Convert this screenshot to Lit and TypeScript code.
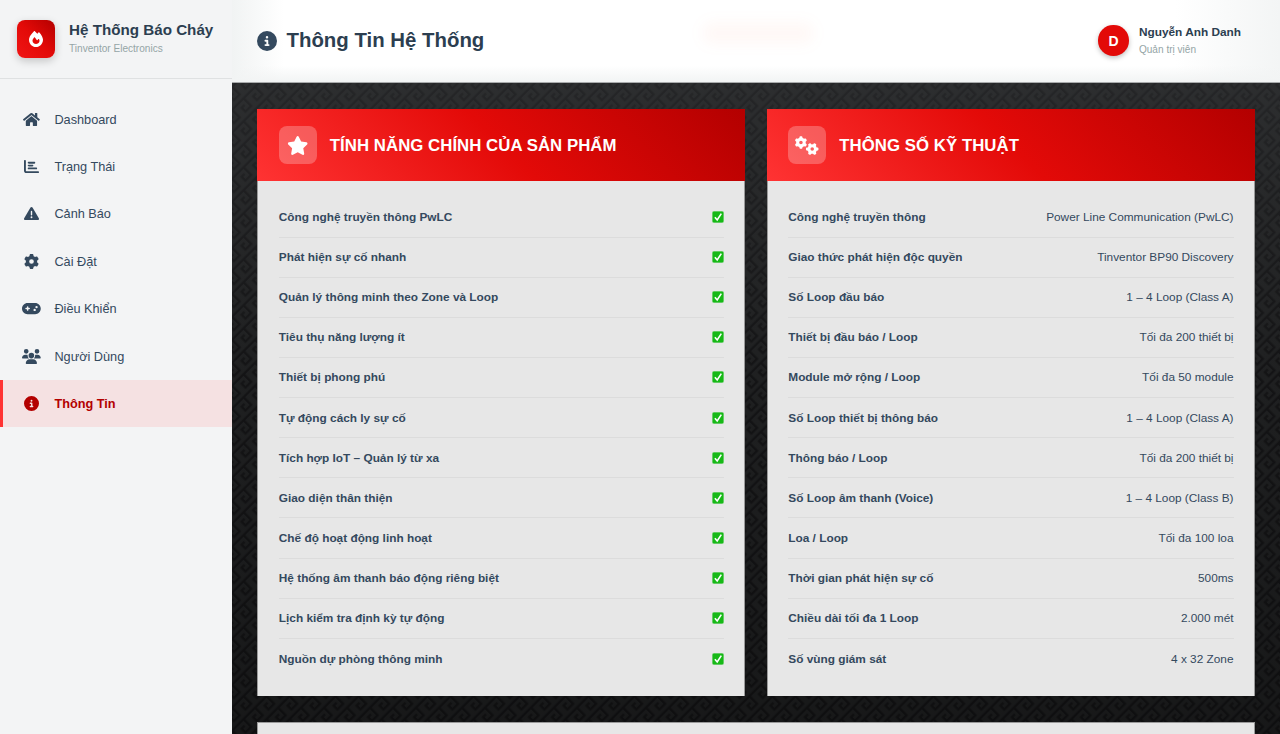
import { LitElement, html, css, svg } from "lit";
import { customElement } from "lit/decorators.js";

const P: Record<string, [string, string]> = {
  home: ["0 0 576 512", "M280.37 148.26L96 300.11V464a16 16 0 0 0 16 16l112.06-.29a16 16 0 0 0 15.92-16V368a16 16 0 0 1 16-16h64a16 16 0 0 1 16 16v95.64a16 16 0 0 0 16 16.05L464 480a16 16 0 0 0 16-16V300L295.67 148.26a12.19 12.19 0 0 0-15.3 0zM571.6 251.47L488 182.56V44.05a12 12 0 0 0-12-12h-56a12 12 0 0 0-12 12v72.61L318.47 43a48 48 0 0 0-61 0L4.34 251.47a12 12 0 0 0-1.6 16.9l25.5 31A12 12 0 0 0 45.15 301l235.22-193.74a12.19 12.19 0 0 1 15.3 0L530.9 301a12 12 0 0 0 16.9-1.6l25.5-31a12 12 0 0 0-1.7-16.93z"],
  chart: ["0 0 512 512", "M32 32c17.7 0 32 14.3 32 32V400c0 8.8 7.2 16 16 16H480c17.7 0 32 14.3 32 32s-14.3 32-32 32H80c-44.2 0-80-35.8-80-80V64C0 46.3 14.3 32 32 32zm96 96c0-17.7 14.3-32 32-32l192 0c17.7 0 32 14.3 32 32s-14.3 32-32 32l-192 0c-17.7 0-32-14.3-32-32zm32 64H288c17.7 0 32 14.3 32 32s-14.3 32-32 32H160c-17.7 0-32-14.3-32-32s14.3-32 32-32zm0 96H416c17.7 0 32 14.3 32 32s-14.3 32-32 32H160c-17.7 0-32-14.3-32-32s14.3-32 32-32z"],
  warn: ["0 0 512 512", "M256 32c14.2 0 27.3 7.5 34.5 19.8l216 368c7.3 12.4 7.3 27.7 .2 40.1S486.3 480 472 480H40c-14.3 0-27.6-7.7-34.7-20.1s-7-27.8 .2-40.1l216-368C228.7 39.5 241.8 32 256 32zm0 128c-13.3 0-24 10.7-24 24V296c0 13.3 10.7 24 24 24s24-10.7 24-24V184c0-13.3-10.7-24-24-24zm32 224a32 32 0 1 0 -64 0 32 32 0 1 0 64 0z"],
  gear: ["0 0 512 512", "M495.9 166.6c3.2 8.7 .5 18.4-6.4 24.6l-43.3 39.4c1.1 8.3 1.7 16.8 1.7 25.4s-.6 17.1-1.7 25.4l43.3 39.4c6.9 6.2 9.6 15.9 6.4 24.6c-4.4 11.9-9.7 23.3-15.8 34.3l-4.7 8.1c-6.6 11-14 21.4-22.1 31.2c-5.9 7.2-15.7 9.6-24.5 6.8l-55.7-17.7c-13.4 10.3-28.2 18.9-44 25.4l-12.5 57.1c-2 9.1-9 16.3-18.2 17.8c-13.8 2.3-28 3.5-42.5 3.5s-28.7-1.2-42.5-3.5c-9.2-1.5-16.2-8.7-18.2-17.8l-12.5-57.1c-15.8-6.5-30.6-15.1-44-25.4L83.1 425.9c-8.8 2.8-18.6 .3-24.5-6.8c-8.1-9.8-15.5-20.2-22.1-31.2l-4.7-8.1c-6.1-11-11.4-22.4-15.8-34.3c-3.2-8.7-.5-18.4 6.4-24.6l43.3-39.4C64.6 273.1 64 264.6 64 256s.6-17.1 1.7-25.4L22.4 191.2c-6.9-6.2-9.6-15.9-6.4-24.6c4.4-11.9 9.7-23.3 15.8-34.3l4.7-8.1c6.6-11 14-21.4 22.1-31.2c5.9-7.2 15.7-9.6 24.5-6.8l55.7 17.7c13.4-10.3 28.2-18.9 44-25.4l12.5-57.1c2-9.1 9-16.3 18.2-17.8C227.3 1.2 241.5 0 256 0s28.7 1.2 42.5 3.5c9.2 1.5 16.2 8.7 18.2 17.8l12.5 57.1c15.8 6.5 30.6 15.1 44 25.4l55.7-17.7c8.8-2.8 18.6-.3 24.5 6.8c8.1 9.8 15.5 20.2 22.1 31.2l4.7 8.1c6.1 11 11.4 22.4 15.8 34.3zM256 336a80 80 0 1 0 0-160 80 80 0 1 0 0 160z"],
  pad: ["0 0 640 512", "M192 64C86 64 0 150 0 256S86 448 192 448H448c106 0 192-86 192-192s-86-192-192-192H192zM496 168a40 40 0 1 1 0 80 40 40 0 1 1 0-80zM392 304a40 40 0 1 1 80 0 40 40 0 1 1 -80 0zM168 200c0-13.3 10.7-24 24-24s24 10.7 24 24v32h32c13.3 0 24 10.7 24 24s-10.7 24-24 24H216v32c0 13.3-10.7 24-24 24s-24-10.7-24-24V280H136c-13.3 0-24-10.7-24-24s10.7-24 24-24h32V200z"],
  users: ["0 0 640 512", "M144 0a80 80 0 1 1 0 160A80 80 0 1 1 144 0zM512 0a80 80 0 1 1 0 160A80 80 0 1 1 512 0zM0 298.7C0 239.8 47.8 192 106.7 192h42.7c15.9 0 31 3.5 44.6 9.7c-1.3 7.2-1.9 14.7-1.9 22.3c0 38.2 16.8 72.5 43.3 96c-.2 0-.4 0-.7 0H21.3C9.6 320 0 310.4 0 298.7zM405.3 320c-.2 0-.4 0-.7 0c26.6-23.5 43.3-57.8 43.3-96c0-7.6-.7-15-1.9-22.3c13.6-6.3 28.7-9.7 44.6-9.7h42.7C592.2 192 640 239.8 640 298.7c0 11.8-9.6 21.3-21.3 21.3H405.3zM224 224a96 96 0 1 1 192 0 96 96 0 1 1 -192 0zM128 485.3C128 411.7 187.7 352 261.3 352H378.7C452.3 352 512 411.7 512 485.3c0 14.7-11.9 26.7-26.7 26.7H154.7c-14.7 0-26.7-11.9-26.7-26.7z"],
  info: ["0 0 512 512", "M256 512A256 256 0 1 0 256 0a256 256 0 1 0 0 512zM216 336h24V272H216c-13.3 0-24-10.7-24-24s10.7-24 24-24h48c13.3 0 24 10.7 24 24v88h8c13.3 0 24 10.7 24 24s-10.7 24-24 24H216c-13.3 0-24-10.7-24-24s10.7-24 24-24zm40-208a32 32 0 1 1 0 64 32 32 0 1 1 0-64z"],
  star: ["0 0 576 512", "M316.9 18C311.6 7 300.4 0 288.1 0s-23.4 7-28.8 18L195 150.3 51.4 171.5c-12 1.8-22 10.2-25.7 21.7s-.7 24.2 7.9 32.7L137.8 329 113.2 474.7c-2 12 3 24.2 12.9 31.3s23 8 33.8 2.3l128.3-68.5 128.3 68.5c10.8 5.7 23.9 4.9 33.8-2.3s14.9-19.3 12.9-31.3L438.5 329 542.7 225.9c8.6-8.5 11.7-21.2 7.9-32.7s-13.7-19.9-25.7-21.7L381.2 150.3 316.9 18z"],
  gears: ["0 0 640 512", "M308.5 135.3c7.1-6.3 9.9-16.2 6.2-25c-2.3-5.3-4.8-10.5-7.6-15.5L304 89.4c-3-5-6.3-9.9-9.8-14.6c-5.7-7.6-15.7-10.1-24.7-7.1l-28.2 9.3c-10.7-8.8-23-16-36.2-20.9L199 27.1c-1.9-9.3-9.1-16.7-18.5-17.8C173.9 8.4 167.2 8 160.4 8h-.7c-6.8 0-13.5 .4-20.1 1.2c-9.4 1.1-16.6 8.6-18.5 17.8L115 56.1c-13.3 5-25.5 12.1-36.2 20.9L50.5 67.8c-9-3-19-.5-24.7 7.1c-3.5 4.7-6.8 9.6-9.9 14.6l-3 5.3c-2.8 5-5.3 10.2-7.6 15.6c-3.7 8.7-.9 18.6 6.2 25l22.2 19.8C32.6 161.9 32 168.9 32 176s.6 14.1 1.7 20.9L11.5 216.7c-7.1 6.3-9.9 16.2-6.2 25c2.3 5.3 4.8 10.5 7.6 15.6l3 5.2c3 5.1 6.3 9.9 9.9 14.6c5.7 7.6 15.7 10.1 24.7 7.1l28.2-9.3c10.7 8.8 23 16 36.2 20.9l6.1 29.1c1.9 9.3 9.1 16.7 18.5 17.8c6.7 .8 13.5 1.2 20.4 1.2s13.7-.4 20.4-1.2c9.4-1.1 16.6-8.6 18.5-17.8l6.1-29.1c13.3-5 25.5-12.1 36.2-20.9l28.2 9.3c9 3 19 .5 24.7-7.1c3.5-4.7 6.8-9.5 9.8-14.6l3.1-5.4c2.8-5 5.3-10.2 7.6-15.5c3.7-8.7 .9-18.6-6.2-25l-22.2-19.8c1.1-6.8 1.7-13.8 1.7-20.9s-.6-14.1-1.7-20.9l22.2-19.8zM112 176a48 48 0 1 1 96 0 48 48 0 1 1 -96 0zM504.7 500.5c6.3 7.1 16.2 9.9 25 6.2c5.3-2.3 10.5-4.8 15.5-7.6l5.4-3.1c5-3 9.9-6.3 14.6-9.8c7.6-5.7 10.1-15.7 7.1-24.7l-9.3-28.2c8.8-10.7 16-23 20.9-36.2l29.1-6.1c9.3-1.9 16.7-9.1 17.8-18.5c.8-6.7 1.2-13.5 1.2-20.4s-.4-13.7-1.2-20.4c-1.1-9.4-8.6-16.6-17.8-18.5L583.9 307c-5-13.3-12.1-25.5-20.9-36.2l9.3-28.2c3-9 .5-19-7.1-24.7c-4.7-3.5-9.6-6.8-14.6-9.9l-5.3-3c-5-2.8-10.2-5.3-15.6-7.6c-8.7-3.7-18.6-.9-25 6.2l-19.8 22.2c-6.8-1.1-13.8-1.7-20.9-1.7s-14.1 .6-20.9 1.7l-19.8-22.2c-6.3-7.1-16.2-9.9-25-6.2c-5.3 2.3-10.5 4.8-15.6 7.6l-5.2 3c-5.1 3-9.9 6.3-14.6 9.9c-7.6 5.7-10.1 15.7-7.1 24.7l9.3 28.2c-8.8 10.7-16 23-20.9 36.2L315.1 313c-9.3 1.9-16.7 9.1-17.8 18.5c-.8 6.7-1.2 13.5-1.2 20.4s.4 13.7 1.2 20.4c1.1 9.4 8.6 16.6 17.8 18.5l29.1 6.1c5 13.3 12.1 25.5 20.9 36.2l-9.3 28.2c-3 9-.5 19 7.1 24.7c4.7 3.5 9.5 6.8 14.6 9.8l5.4 3.1c5 2.8 10.2 5.3 15.5 7.6c8.7 3.7 18.6 .9 25-6.2l19.8-22.2c6.8 1.1 13.8 1.7 20.9 1.7s14.1-.6 20.9-1.7l19.8 22.2zM464 304a48 48 0 1 1 0 96 48 48 0 1 1 0-96z"],
  fire: ["0 0 448 512", "M159.3 5.4c7.8-7.3 19.9-7.2 27.7 .1c27.6 25.9 53.5 53.8 77.7 84c11-14.4 23.5-30.1 37-42.9c7.9-7.4 20.1-7.4 28 .1c34.6 33 63.9 76.6 84.5 118c20.3 40.8 33.8 82.5 33.8 111.9C448 404.2 348.2 512 224 512C98.4 512 0 404.1 0 276.5c0-38.4 17.8-85.3 45.4-131.7C73.3 97.7 112.7 48.6 159.3 5.4zM225.7 416c25.3 0 47.7-7 68.8-21c42.1-29.4 53.4-88.2 28.1-134.4c-4.5-9-16-9.6-22.5-2l-25.2 29.3c-6.6 7.6-18.5 7.4-24.7-.5c-16.5-21-46-58.5-62.8-79.8c-6.3-8-18.3-8.1-24.7-.1c-33.8 42.5-50.8 69.3-50.8 99.4C112 375.4 162.6 416 225.7 416z"],
};

const icon = (n: string) => {
  const [vb, d] = P[n];
  return html`<svg class="ic" viewBox=${vb} fill="currentColor" aria-hidden="true">${svg`<path d=${d}></path>`}</svg>`;
};

const check = () => html`<svg class="chk" viewBox="0 0 12 12" aria-hidden="true">
  ${svg`<rect x=".3" y=".3" width="11.4" height="11.4" rx="1.8" fill="#17b917" stroke="#7bd07b" stroke-width=".6"></rect>
  <path d="M2.9 6.2 5.2 9 9.3 2.6" fill="none" stroke="#fff" stroke-width="1.6"></path>`}
</svg>`;

const NAV: [string, string][] = [
  ["home", "Dashboard"], ["chart", "Trạng Thái"], ["warn", "Cảnh Báo"], ["gear", "Cài Đặt"],
  ["pad", "Điều Khiển"], ["users", "Người Dùng"], ["info", "Thông Tin"],
];
const FEATURES = [
  "Công nghệ truyền thông PwLC", "Phát hiện sự cố nhanh", "Quản lý thông minh theo Zone và Loop",
  "Tiêu thụ năng lượng ít", "Thiết bị phong phú", "Tự động cách ly sự cố", "Tích hợp IoT – Quản lý từ xa",
  "Giao diện thân thiện", "Chế độ hoạt động linh hoạt", "Hệ thống âm thanh báo động riêng biệt",
  "Lịch kiểm tra định kỳ tự động", "Nguồn dự phòng thông minh",
];
const SPECS: [string, string][] = [
  ["Công nghệ truyền thông", "Power Line Communication (PwLC)"],
  ["Giao thức phát hiện độc quyền", "Tinventor BP90 Discovery"],
  ["Số Loop đầu báo", "1 – 4 Loop (Class A)"],
  ["Thiết bị đầu báo / Loop", "Tối đa 200 thiết bị"],
  ["Module mở rộng / Loop", "Tối đa 50 module"],
  ["Số Loop thiết bị thông báo", "1 – 4 Loop (Class A)"],
  ["Thông báo / Loop", "Tối đa 200 thiết bị"],
  ["Số Loop âm thanh (Voice)", "1 – 4 Loop (Class B)"],
  ["Loa / Loop", "Tối đa 100 loa"],
  ["Thời gian phát hiện sự cố", "500ms"],
  ["Chiều dài tối đa 1 Loop", "2.000 mét"],
  ["Số vùng giám sát", "4 x 32 Zone"],
];

@customElement("app-root")
export class AppRoot extends LitElement {
  static styles = css`
    :host {
      display: flex;
      width: 100%;
      height: 100vh;
      overflow: hidden;
      font-family: "Liberation Sans", Arial, sans-serif;
      color: #34495e;
    }
    * { box-sizing: border-box; }
    .ic { display: block; height: 1em; width: auto; }

    .side { width: 232px; flex: none; background: #f3f4f5; }
    .brand {
      height: 79px;
      padding: 0 0 1px 17px;
      display: flex;
      align-items: center;
      gap: 14px;
      border-bottom: 1px solid #dfe1e2;
    }
    .logo {
      width: 38px; height: 38px;
      border-radius: 8px;
      display: flex; align-items: center; justify-content: center;
      color: #fff;
      font-size: 16px;
      background: linear-gradient(45deg, #f01515 0%, #e30a08 50%, #b30000 100%);
      box-shadow: 0 3px 8px rgba(0,0,0,.2);
    }
    .brand-text { padding-bottom: 1.5px; }
    .brand h1 { margin: 0 0 2px; font-size: 15.2px; line-height: 20px; font-weight: 700; color: #2c3e50; white-space: nowrap; }
    .brand p { margin: 0; font-size: 10.08px; line-height: 13px; color: #95a5a6; }
    nav { padding-top: 16.4px; }
    .item {
      height: 47.4px;
      display: flex;
      align-items: center;
      padding-left: 21.7px;
      font-size: 12.72px;
      color: #34495e;
    }
    .item .wrap { width: 20px; margin-right: 12.7px; display: flex; justify-content: center; font-size: 15px; }
    .item.on {
      background: #f5e1e2;
      border-left: 3px solid #ff3333;
      padding-left: 18.7px;
      color: #b30000;
      font-weight: 700;
    }

    .main { flex: 1; min-width: 0; display: flex; flex-direction: column; background: #1b1c1d; }
    header {
      position: relative;
      height: 83px;
      flex: none;
      padding: 0 39px 1px 25px;
      display: flex;
      align-items: center;
      justify-content: space-between;
      border-bottom: 1px solid #a9abac;
      background:
        linear-gradient(180deg, rgba(240,242,243,0) 80%, #f2f4f4 100%),
        linear-gradient(90deg, #f1f3f3 0%, #fff 5%, #fff 90%, #f3f5f5 100%);
    }
    .smudge {
      position: absolute;
      left: 470px; top: 22px;
      width: 112px; height: 22px;
      border-radius: 11px;
      background: rgba(255, 120, 80, .05);
      filter: blur(7px);
    }
    .title { display: flex; align-items: center; gap: 9.5px; font-size: 20px; }
    .title h2 { margin: 0; font-size: 20.4px; font-weight: 700; color: #2c3e50; }
    .user { display: flex; align-items: center; gap: 10px; }
    .avatar {
      width: 30.5px; height: 30.5px;
      border-radius: 50%;
      display: flex; align-items: center; justify-content: center;
      color: #fff;
      font-size: 14px; font-weight: 700;
      background: #e30a08;
      box-shadow: 0 2px 5px rgba(0,0,0,.25);
    }
    .user b { display: block; font-size: 11.84px; line-height: 15px; color: #2c3e50; margin-bottom: 3px; }
    .user span { display: block; font-size: 10.08px; line-height: 13px; color: #95a5a6; }

    .content {
      flex: 1;
      min-height: 0;
      overflow: hidden;
      padding: 26px 25.5px 26px 25px;
      background-color: #1f2021;
      background-image:
        linear-gradient(180deg, rgba(70,72,74,.35) 0%, rgba(30,30,30,.05) 45%, rgba(0,0,0,.25) 100%),
        url("data:image/svg+xml,%3Csvg xmlns='http://www.w3.org/2000/svg' width='1048' height='660'%3E%3Cdefs%3E%3Cpattern id='k' width='16.26' height='16.26' patternUnits='userSpaceOnUse' patternTransform='rotate(45)'%3E%3Cpath d='M2.7 0V16.26M2.7 2.7H13.5V10.8H8.1V6.5' fill='none' stroke='%23101011' stroke-opacity='.8' stroke-width='2.4'/%3E%3C/pattern%3E%3C/defs%3E%3Crect width='1048' height='660' fill='url(%23k)'/%3E%3C/svg%3E");
    }
    .grid { display: grid; grid-template-columns: 1fr 1fr; gap: 21.5px; }
    .card { background: #e7e7e7; }
    .head {
      height: 72px;
      padding: 1.5px 21.5px 0 21.8px;
      display: flex;
      align-items: center;
      gap: 13px;
      color: #fff;
      background: linear-gradient(45deg, #ff3333 0%, #e30a08 50%, #b30000 100%);
    }
    .head .box {
      width: 38px; height: 38px;
      margin-top: -1.5px;
      border-radius: 8px;
      background: rgba(255,255,255,.25);
      display: flex; align-items: center; justify-content: center;
      font-size: 19px;
    }
    .head h3 { margin: 0; font-size: 16.8px; font-weight: 700; letter-spacing: .04px; }
    .rows {
      padding: 16.4px 21px 17.3px 21.8px;
      box-shadow: inset 1px 0 #9a9a9a, inset -1px 0 #9a9a9a;
    }
    .row {
      height: 40.13px;
      display: flex;
      align-items: center;
      justify-content: space-between;
      font-size: 11.84px;
      border-bottom: 1px solid #dcdcdc;
    }
    .row:last-child { border-bottom: 0; }
    .row b { font-weight: 700; color: #34495e; }
    .row span { color: #34495e; }
    .chk { width: 12px; height: 12px; display: block; }
    .next { margin-top: 26px; height: 200px; background: #e7e7e7; box-shadow: inset 1px 1px #9a9a9a, inset -1px 0 #9a9a9a; }
  `;

  render() {
    return html`
      <aside class="side">
        <div class="brand">
          <div class="logo">${icon("fire")}</div>
          <div class="brand-text">
            <h1>Hệ Thống Báo Cháy</h1>
            <p>Tinventor Electronics</p>
          </div>
        </div>
        <nav>
          ${NAV.map(([i, t]) => html`<div class="item ${t === "Thông Tin" ? "on" : ""}"><div class="wrap">${icon(i)}</div>${t}</div>`)}
        </nav>
      </aside>
      <div class="main">
        <header>
          <div class="title">${icon("info")}<h2>Thông Tin Hệ Thống</h2></div>
          <div class="smudge"></div>
          <div class="user">
            <div class="avatar">D</div>
            <div><b>Nguyễn Anh Danh</b><span>Quản trị viên</span></div>
          </div>
        </header>
        <div class="content">
          <div class="grid">
            <section class="card">
              <div class="head"><div class="box">${icon("star")}</div><h3>TÍNH NĂNG CHÍNH CỦA SẢN PHẨM</h3></div>
              <div class="rows">
                ${FEATURES.map((f) => html`<div class="row"><b>${f}</b>${check()}</div>`)}
              </div>
            </section>
            <section class="card">
              <div class="head"><div class="box">${icon("gears")}</div><h3>THÔNG SỐ KỸ THUẬT</h3></div>
              <div class="rows">
                ${SPECS.map(([k, v]) => html`<div class="row"><b>${k}</b><span>${v}</span></div>`)}
              </div>
            </section>
          </div>
          <div class="next"></div>
        </div>
      </div>
    `;
  }
}
